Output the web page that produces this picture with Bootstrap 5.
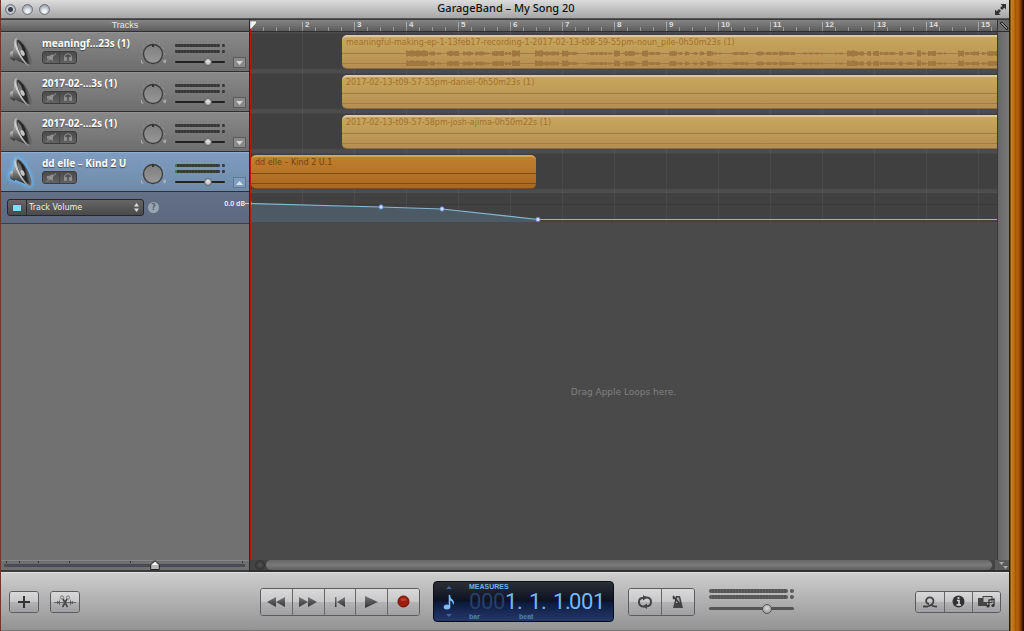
<!DOCTYPE html>
<html lang="en">
<head>
<meta charset="utf-8">
<meta name="viewport" content="width=device-width, initial-scale=1">
<title>GarageBand – My Song 20</title>
<link href="https://cdn.jsdelivr.net/npm/bootstrap@5.3.0/dist/css/bootstrap.min.css" rel="stylesheet">
<style>
body{font-family:"DejaVu Sans","Noto Sans",sans-serif;font-size:9px;line-height:12px;background:#4a4a4a;color:#eee}
button,select,input{font-family:inherit;border-radius:0}
.shrinkable{min-width:0}
.desk{border-left:1px solid #6b3a26}
.wood{width:15px;background:linear-gradient(90deg,#2d1a08 0 1px,#d08a1c 2px,#b96e14 4px,#c97d18 5px,#a04e08 6px,#b8660f 8px,#a85408 10px,#7a3503 12px,#2c0d02 14px)}
/* title bar */
.titlebar{height:19px;background:linear-gradient(#dcdcdc,#a6a6a6);border-bottom:1px solid #555;color:#111;padding:0 2px 0 4px}
.titlebar h1{font:500 11px/16px "Noto Sans",sans-serif;margin:0;padding-bottom:2px}
.side{width:60px}
.lights{gap:6px}
.light{width:11px;height:11px;padding:0;border:1px solid #6d727a;border-radius:50%;background:radial-gradient(circle at 50% 70%,#eef0f4 20%,#b4b8c2 60%,#7f848e)}
.light.dirty{background:radial-gradient(circle,#3c4046 0 2px,#c8ccd4 3px,#9095a0)}
/* tracks column */
.tracks{width:249px;background:#717171;border-right:1px solid #2a2a2a}
.strip{height:13px;background:linear-gradient(#858585,#5c5c5c);border-top:1px solid #3b3b3b;border-bottom:1px solid #2e2e2e}
.strip-title{font:9px/11px "Liberation Sans",sans-serif;color:#e8e8e8}
.track{height:40px;background:linear-gradient(#888,#6e6e6e);border-top:1px solid #929292;border-bottom:1px solid #2f2f2f;padding:0 3px 0 7px}
.track.on{background:linear-gradient(#7e9cc1,#708ba8);border-top-color:#93aecd}
.tr-icon{width:34px}
.track.on .tr-icon svg{filter:drop-shadow(0 0 2px #4fb0ff) drop-shadow(0 0 1px #7cc8ff)}
.tr-name{font:700 10px/13px "Noto Sans",sans-serif;color:#fff;text-shadow:0 1px 1px #444;white-space:nowrap}
.pair{width:35px;height:13px;margin-top:1px;border:1px solid #3d3d3d;border-radius:3px;overflow:hidden;background:linear-gradient(#4a4a4a,#626262)}
.pair button{flex:1;padding:0;border:0;background:none;display:flex;align-items:center;justify-content:center}
.pair button+button{border-left:1px solid #444}
.pan{margin:3px 7px 0 0}
.vol{width:50px;gap:3px;padding-top:6px}
.led-row{gap:2px}
.led{height:3px;border-radius:1px;background:repeating-linear-gradient(90deg,#373737 0 2px,#424242 2px 3px)}
.led.clip{width:3px}
.track.on .led.long{border-left:2px solid #3c7a3f}
input[type=range]{appearance:none;-webkit-appearance:none;background:none;width:100%;margin:0;display:block}
.vol input{height:8px;margin-top:2px}
.vol input::-webkit-slider-runnable-track{height:2px;background:#222;border-radius:1px}
.vol input::-webkit-slider-thumb{-webkit-appearance:none;width:8px;height:8px;margin-top:-3px;border-radius:50%;border:1px solid #666;background:radial-gradient(circle at 50% 40%,#eee,#999)}
.fold{width:13px;height:11px;padding:0;border:1px solid #5a5a5a;background:#8a8a8a;display:flex;align-items:center;justify-content:center;margin-bottom:3px}
.track.on .fold{background:#7f9dbd;border-color:#5c7896}
.auto{height:32px;background:linear-gradient(#647085,#5c697e);border-bottom:1px solid #3a3f49;padding:0 0 0 6px}
.param{width:137px;height:17px;border:1px solid #272727;border-radius:3px;background:linear-gradient(#666,#4a4a4a)}
.param input{appearance:none;width:8px;height:6px;margin:0 5px;background:#7fdcff;box-shadow:0 0 1px #222}
.param .led-box{width:19px;border-right:1px solid #2c2c2c}
.param select{appearance:none;border:0;background:none;color:#eee;font-size:8px;line-height:13px;padding:0 0 0 2px;width:100%}
.param svg{right:4px;top:3px;pointer-events:none}
.help{width:11px;height:11px;padding:0;border:0;border-radius:50%;background:#9aa5b4;color:#556278;font-weight:700;font-size:8px;line-height:11px}
.db{font:600 7px/9px "Noto Sans",sans-serif;padding-top:7px}
.zoomrow{height:12px;padding:0 4px 0 3px;border-top:1px solid #858585;border-bottom:2px solid #3b3b3b;
 background:linear-gradient(#333,#333) 5px 0/1px 2px no-repeat,linear-gradient(#333,#333) 18px 0/1px 2px no-repeat,linear-gradient(#333,#333) 37px 0/1px 2px no-repeat,linear-gradient(#333,#333) 68px 0/1px 2px no-repeat,linear-gradient(#333,#333) 129px 0/1px 2px no-repeat,linear-gradient(#333,#333) 241px 0/1px 2px no-repeat,#6f6f6f}
.zoomrow input{height:9px}
.zoomrow input::-webkit-slider-runnable-track{height:3px;border-radius:1px;background:#474c52}
.zoomrow input::-webkit-slider-thumb{-webkit-appearance:none;width:10px;height:10px;margin-top:-4px;border:0;border-radius:0;background:url("data:image/svg+xml,%3Csvg xmlns='http://www.w3.org/2000/svg' viewBox='0 0 10 10'%3E%3Cpath d='M5 .7 9.300 4.500v5H.7v-5z' fill='%23b8b8b8' stroke='%23222'/%3E%3Cpath d='M5 2 8 5H2z' fill='%23fff'/%3E%3C/svg%3E") center/100% 100% no-repeat}
/* timeline */
.ruler{overflow:hidden;background:repeating-linear-gradient(90deg,#999 0 1px,transparent 1px 13px) 0 100%/100% 4px no-repeat,repeating-linear-gradient(90deg,#aaa 0 1px,transparent 1px 52px) 0 100%/100% 9px no-repeat}
.bar-no{flex:0 0 52px;height:11px;color:#ddd;font:700 8px/10px "Liberation Sans",sans-serif;padding-left:3px}
.corner{width:12px;background:#6a6a6a;border-left:1px solid #333}
.lanes{background:#4a4a4a}
.lane{height:40px;padding-top:3px;background:repeating-linear-gradient(90deg,#ffffff0c 0 1px,transparent 1px 52px),linear-gradient(#4c4c4c 0 1px,#404040 2px 36px,#4c4c4c 38px)}
.clip-box{height:34px;border-radius:5px 0 0 5px;border-top:2px solid #dccb92;border-bottom:1px solid #8f6d40;color:#a36f2e;padding-left:4px;overflow:hidden;white-space:nowrap;
 background:linear-gradient(#9f7d47,#9f7d47) 0 16px/100% 1px no-repeat,linear-gradient(#9f7d47,#9f7d47) 0 26px/100% 1px no-repeat,linear-gradient(#c7a85b,#b68d53)}
.clip-box.hot{width:285px;border-radius:5px;border-top-color:#d5a352;border-bottom-color:#7d4a18;color:#74401a;background:linear-gradient(#824a17,#824a17) 0 16px/100% 1px no-repeat,linear-gradient(#824a17,#824a17) 0 26px/100% 1px no-repeat,linear-gradient(#c17f2c,#a96822)}
.clip-name{font-size:8px;line-height:11px}
.wave{left:0;top:9px}
.curve{height:32px;background:repeating-linear-gradient(90deg,#ffffff0c 0 1px,transparent 1px 52px) 0 0/100% 30px no-repeat,linear-gradient(#4f4f4f 0 1px,#414141 1px 12px,#393939 12px 13px,#414141 13px 30px,#4a4a4a 30px)}
.drop{color:#808080}
.playhead{width:1px;top:10px;bottom:12px;left:0;background:#b31b05}
.playhead svg{position:absolute;left:0;top:-9px}
.vscroll{width:12px;background:linear-gradient(90deg,#666,#7a7a7a);border-left:1px solid #3a3a3a}
.hscroll{height:12px;background:#444;border-bottom:2px solid #303030}
.knob{width:10px;height:10px;border-radius:50%;background:radial-gradient(#555,#222);margin-left:5px}
.thumb{height:10px;background:linear-gradient(#686868,#7a7a7a,#5f5f5f);border-radius:5px;margin:0 3px 0 1px}
/* transport */
.transport{height:59px;background:linear-gradient(#cdcdcd,#939393);border-top:1px solid #e0e0e0;border-bottom:1px solid #777;padding:0 8px}
.keys{border:1px solid #5c5c5c;border-radius:3px;overflow:hidden}
.keys button{border:0;padding:0;display:flex;align-items:center;justify-content:center;background:linear-gradient(#d9d9d9 0,#c8c8c8 48%,#b2b2b4 52%,#a0a0a2)}
.keys button+button{border-left:1px solid #666}
.small-keys{height:22px}.small-keys button{width:28px}
.big-keys{height:28px}.big-keys button{flex:1 1 0}
.five{width:160px}.two{width:67px}
.left-tools{width:251px;gap:11px}
.lcd{width:181px;height:41px;margin:0 14px 0 13px;border:1px solid #090d18;border-radius:4px;background:linear-gradient(#2a2f35,#0d1222 48%,#0b1a3c 52%,#26386b);color:#6bb0f3;padding:0 8px 0 9px}
.readout{margin-left:14px}
.lcd .lab{font:700 7px/9px "Liberation Sans",sans-serif}
.lcd .sub{color:#4e82c0}
.lcd .sub span{width:50px}
.digits{font:400 22px/21px Roboto,sans-serif;color:#72b8fa}
.digits span{width:12px;text-align:center}
.digits .off{color:#26406c}
.digits .dot{width:4px;text-align:left}
.digits .gap{width:8px}
.master{width:85px;gap:2px;margin-left:14px}
.master .led{height:4px;border-radius:2px;background:repeating-linear-gradient(90deg,#555 0 2px,#606060 2px 3px)}
.master .led.clip{width:4px}
.master input{height:11px;margin-top:2px}
.master input::-webkit-slider-runnable-track{height:3px;background:#555;border-radius:2px}
.master input::-webkit-slider-thumb{-webkit-appearance:none;width:10px;height:10px;margin-top:-3px;border-radius:50%;border:1px solid #555;background:radial-gradient(circle at 50% 40%,#ddd,#8a8a8a)}
</style>
</head>
<body>
<svg width="0" height="0" class="position-absolute">
 <defs>
  <linearGradient id="metal" x1="0" x2="1" y1="0" y2=".4"><stop offset="0" stop-color="#fff"/><stop offset=".4" stop-color="#aaa"/><stop offset="1" stop-color="#555"/></linearGradient>
  <linearGradient id="inside" x1="0" x2="1" y1="0" y2="1"><stop offset="0" stop-color="#999"/><stop offset=".3" stop-color="#333"/><stop offset=".6" stop-color="#222"/><stop offset="1" stop-color="#aaa"/></linearGradient>
  <linearGradient id="magnet" x1="0" x2="0" y1="0" y2="1"><stop offset="0" stop-color="#ddd"/><stop offset=".45" stop-color="#888"/><stop offset="1" stop-color="#222"/></linearGradient>
  <linearGradient id="cap" x1="0" x2="0" y1="0" y2="1"><stop offset="0" stop-color="#7e7e7e"/><stop offset="1" stop-color="#989898"/></linearGradient>
  <linearGradient id="ink" x1="0" x2="0" y1="0" y2="1"><stop offset="0" stop-color="#777"/><stop offset="1" stop-color="#333"/></linearGradient>
 </defs>
 <symbol id="speaker" viewBox="0 0 25 32"><path d="M6 14.500 2.500 16q-2 3 0 7l4.500 2z" fill="url(#magnet)"/><path d="M7 4 5 15q-1 4 1.500 8.500L20 29z" fill="url(#magnet)"/><ellipse cx="15" cy="16" rx="5" ry="15.800" fill="url(#metal)" transform="rotate(-27 15 16)"/><ellipse cx="15.500" cy="16" rx="3.600" ry="13.800" fill="url(#inside)" transform="rotate(-27 15.500 16)"/><path d="M10 6q4 4 4.500 9l-3 1Q9.500 10 10 6z" fill="#777"/><ellipse cx="14.500" cy="17" rx="1.900" ry="3" fill="#c4c4c4" transform="rotate(-27 14.500 17)"/></symbol>
 <symbol id="mute" viewBox="0 0 11 9"><path d="M1 3h2l4-2v7L3 6H1z" fill="#8c8c8c"/><path d="M1 8.500 10 .5" stroke="#9a9a9a"/></symbol>
 <symbol id="solo" viewBox="0 0 10 9"><path d="M1.500 6V4a3.500 3.300 0 0 1 7 0v2" fill="none" stroke="#8f8f8f"/><rect x="1" y="4" width="3" height="4" rx="1" fill="#8f8f8f"/><rect x="6" y="4" width="3" height="4" rx="1" fill="#8f8f8f"/></symbol>
 <symbol id="pan" viewBox="0 0 30 28"><path d="M4.500 18A11.500 11.500 0 1 1 25.500 18" fill="none" stroke="#aaa" stroke-dasharray="1 4.800"/><circle cx="15" cy="14" r="9.500" fill="url(#cap)" stroke="#3c3c3c" stroke-width="1.300"/><path d="M15 4.500v2.500" stroke="#333" stroke-width="2"/><path d="M3.500 20v3h2M26 23v-3h1.500v1.500H26l2 1.500" fill="none" stroke="#bbb" stroke-width=".8"/></symbol>
 <symbol id="down" viewBox="0 0 7 4"><path d="M0 0h7L3.500 4z" fill="#d5d5d5"/></symbol>
 <symbol id="up" viewBox="0 0 7 4"><path d="M0 4h7L3.500 0z" fill="#d5e2f0"/></symbol>
</svg>

<div class="d-flex min-vh-100">
<div class="desk shrinkable d-flex flex-column flex-grow-1">
 <header class="titlebar d-flex justify-content-between align-items-center">
  <div class="side lights d-flex"><button class="light dirty" aria-label="Close"></button><button class="light" aria-label="Minimize"></button><button class="light" aria-label="Zoom"></button></div>
  <h1>GarageBand – My Song 20</h1>
  <div class="side d-flex justify-content-end"><svg width="13" height="13" viewBox="0 0 13 13"><path d="M6.500 1H12v5.500l-1.800-1.800L8 7 6 5l2.300-2.200zM6.500 12H1V6.500l1.800 1.800L5 6l2 2-2.300 2.200z" fill="#333"/></svg></div>
 </header>

 <main class="d-flex flex-grow-1">
  <section class="tracks d-flex flex-column flex-shrink-0">
   <div class="strip strip-title text-center">Tracks</div>
   <div id="trackList"></div>
   <div class="auto d-flex align-items-center">
    <div class="param d-flex position-relative align-items-center">
     <div class="led-box d-flex align-items-center h-100 flex-shrink-0"><input type="checkbox" checked aria-label="Enable automation"></div>
     <select aria-label="Automation parameter"><option>Track Volume</option></select>
     <svg class="position-absolute" width="5" height="9" viewBox="0 0 5 9"><path d="M0 3.500h5L2.500 0zM0 5.500h5L2.500 9z" fill="#ddd"/></svg>
    </div>
    <button class="help ms-1 text-center" aria-label="Help">?</button>
    <div class="db ms-auto align-self-start d-flex align-items-center">0.0 dB<svg width="4" height="3"><path d="M0 1.500h4" stroke="#ccc"/></svg></div>
   </div>
   <div class="zoomrow mt-auto"><input type="range" min="0" max="100" value="63" aria-label="Timeline zoom"></div>
  </section>

  <section class="shrinkable flex-grow-1 d-flex flex-column position-relative">
   <div class="strip d-flex"><div id="ruler" class="ruler shrinkable d-flex flex-grow-1"></div>
    <div class="corner flex-shrink-0 d-flex align-items-center justify-content-center"><svg width="10" height="10" viewBox="0 0 10 10"><path d="m1 2 2-1 6 6-1 2z" fill="#888" stroke="#222"/></svg></div></div>
   <div class="d-flex flex-grow-1">
    <div class="lanes shrinkable flex-grow-1 d-flex flex-column">
     <div class="lane"><div class="clip-box position-relative" style="margin-left:92px"><div class="clip-name">meaningful-making-ep-1-13feb17-recording-1-2017-02-13-t08-59-55pm-noun_pile-0h50m23s (1)</div><svg id="wave" class="wave position-absolute" width="100%" height="20"></svg></div></div>
     <div class="lane"><div class="clip-box" style="margin-left:92px"><div class="clip-name">2017-02-13-t09-57-55pm-daniel-0h50m23s (1)</div></div></div>
     <div class="lane"><div class="clip-box" style="margin-left:92px"><div class="clip-name">2017-02-13-t09-57-58pm-josh-ajima-0h50m22s (1)</div></div></div>
     <div class="lane"><div class="clip-box hot" style="margin-left:1px"><div class="clip-name">dd elle – Kind 2 U.1</div></div></div>
     <div class="curve"><svg class="d-block" width="100%" height="32"><path d="M0 11.500 131 15l61 2 96 10v3H0z" fill="#4b5a65"/><path d="M0 11.500 131 15l61 2 96 10.500h6000" fill="none" stroke="#86b8d2" stroke-width="1.200"/><g fill="#cfe0ff" stroke="#5c80d8"><circle cx="0" cy="11.500" r="2"/><circle cx="131" cy="15" r="2.200"/><circle cx="192" cy="17" r="2.200"/><circle cx="288" cy="27.500" r="2.200"/></g></svg></div>
     <div class="drop flex-grow-1 d-flex align-items-center justify-content-center">Drag Apple Loops here.</div>
    </div>
    <div class="vscroll flex-shrink-0"></div>
   </div>
   <div class="hscroll d-flex"><div class="knob"></div><div class="thumb flex-grow-1"></div><svg width="14" height="10" viewBox="0 0 14 10"><path d="M0 0h14v10H0z" fill="#5a5a5a"/><path d="M4 2h5L6.500 5zM8 6h5l-2.500 3z" fill="#aaa"/></svg></div>
   <div class="playhead position-absolute"><svg width="7" height="9" viewBox="0 0 7 9"><path d="M0 1h6.500v2L1 9H0z" fill="#f2f2f2" stroke="#333" stroke-width=".4"/></svg></div>
  </section>
 </main>

 <footer class="transport d-flex align-items-center">
  <div class="left-tools d-flex flex-shrink-0">
   <div class="keys small-keys"><button class="h-100" aria-label="Add track"><svg width="14" height="14" viewBox="0 0 14 14"><path d="M7 1v12M1 7h12" stroke="#333" stroke-width="2"/></svg></button></div>
   <div class="keys small-keys"><button class="h-100" aria-label="Edit track"><svg width="22" height="14" viewBox="0 0 22 14"><path d="M9 4l4.500 8M13 4l-4.500 8" stroke="#444" stroke-width="1.600"/><circle cx="8" cy="2.500" r="1.600" fill="none" stroke="#777"/><circle cx="14" cy="2.500" r="1.600" fill="none" stroke="#777"/><path d="M0 7.500h22" stroke="#555" stroke-width=".8"/><path d="M3 6l2 1 1-3v7l-1-3-2 1zM19 6l-2 1-1-3v7l1-3 2 1z" fill="#555"/></svg></button></div>
  </div>
  <div class="d-flex align-items-center flex-shrink-0">
   <div class="keys big-keys five d-flex">
    <button aria-label="Rewind"><svg width="18" height="10"><path d="M9 0v10L0 5zM18 0v10L9 5z" fill="url(#ink)"/></svg></button>
    <button aria-label="Fast forward"><svg width="18" height="10"><path d="M0 0v10l9-5zM9 0v10l9-5z" fill="url(#ink)"/></svg></button>
    <button aria-label="Go to beginning"><svg width="10" height="10"><path d="M0 0h1.500v10H0zM10 0v10L2 5z" fill="url(#ink)"/></svg></button>
    <button aria-label="Play"><svg width="13" height="12"><path d="M0 0v12l13-6z" fill="url(#ink)"/></svg></button>
    <button aria-label="Record"><svg width="13" height="13"><circle cx="6.500" cy="6.500" r="5.500" fill="#a01c0d" stroke="#601208"/><ellipse cx="6.500" cy="4.500" rx="3" ry="1.500" fill="#b8402d"/></svg></button>
   </div>
   <div class="lcd d-flex">
    <svg class="flex-shrink-0" width="12" height="37" viewBox="0 0 12 37"><path d="M3 7h6L6 4zM3 32h6l-3 3z" fill="#3f6596"/><path d="M6.500 13v12" stroke="#7dbcf5" stroke-width="1.600"/><path d="M6 12q1 4 4 6 2 3 0 5 0-4-4-5z" fill="#7dbcf5"/><ellipse cx="4" cy="25" rx="3.300" ry="2.500" fill="#7dbcf5"/></svg>
    <div class="readout">
     <div class="lab">MEASURES</div>
     <div class="digits d-flex" aria-label="Position"><span class="off">0</span><span class="off">0</span><span class="off">0</span><span>1</span><span class="dot">.</span><span class="gap"></span><span>1</span><span class="dot">.</span><span class="gap"></span><span>1</span><span class="dot">.</span><span>0</span><span>0</span><span>1</span></div>
     <div class="lab sub d-flex"><span>bar</span><span>beat</span></div>
    </div>
   </div>
   <div class="keys big-keys two d-flex">
    <button aria-label="Cycle"><svg width="16" height="14" viewBox="0 0 16 14"><path d="M8.500 11.500H6A4.500 4.500 0 0 1 2 7q0-4 4-4h1M7.500 2.500H10A4.500 4.500 0 0 1 14 7q0 4-4 4.300" fill="none" stroke="#444" stroke-width="2"/><path d="m6 0 4 2.700L6 5.500zM10 8.500V14l-4-2.700z" fill="#444"/></svg></button>
    <button aria-label="Metronome"><svg width="12" height="14" viewBox="0 0 12 14"><path d="M4 1h4l3 12H1z" fill="#444"/><path d="M5 2.500h2L8 8H4z" fill="#aaa"/><path d="M1 1l7 8" stroke="#333" stroke-width="1.300"/><circle cx="2" cy="3" r="1.400" fill="#444"/></svg></button>
   </div>
   <div class="master d-flex flex-column">
    <div class="led-row d-flex"><div class="led long flex-grow-1"></div><div class="led clip"></div></div>
    <div class="led-row d-flex"><div class="led long flex-grow-1"></div><div class="led clip"></div></div>
    <input type="range" min="0" max="100" value="70" aria-label="Master volume">
   </div>
  </div>
  <div class="keys small-keys d-flex ms-auto">
   <button aria-label="Loop browser"><svg width="14" height="12" viewBox="0 0 14 12"><path d="M0 10.500h4.500Q10.500 9 10.500 5a3.700 3.700 0 0 0-7.400 0q0 2.500 3 3M8 9q3 2 6 1.500" fill="none" stroke="#444" stroke-width="1.800"/></svg></button>
   <button aria-label="Track info"><svg width="13" height="13" viewBox="0 0 13 13"><circle cx="6.500" cy="6.500" r="6" fill="#333"/><path d="M5 5.500h2V10M4.500 10h4.500" stroke="#ddd" stroke-width="1.500" fill="none"/><circle cx="6.500" cy="3" r="1.100" fill="#ddd"/></svg></button>
   <button aria-label="Media browser"><svg width="18" height="12" viewBox="0 0 18 12"><rect y="2" width="9" height="8" fill="#444"/><rect x="5" y=".5" width="9" height="6" fill="#bbb" stroke="#444"/><path d="M11 10V4l5-1v6" fill="none" stroke="#333" stroke-width="1.300"/><circle cx="10" cy="10" r="1.600" fill="#333"/><circle cx="15" cy="9.500" r="1.600" fill="#333"/></svg></button>
  </div>
 </footer>
</div>
<div class="wood flex-shrink-0"></div>
</div>

<script src="https://cdn.jsdelivr.net/npm/bootstrap@5.3.0/dist/js/bootstrap.bundle.min.js"></script>
<script>
const tracks = ['meaningf…23s (1)', '2017-02-…3s (1)', '2017-02-…2s (1)', 'dd elle – Kind 2 U'];
const led = '<div class="led-row d-flex"><div class="led long flex-grow-1"></div><div class="led clip"></div></div>';
document.getElementById('trackList').innerHTML = tracks.map((name, i) => {
  const on = i === 3;
  return `<div class="track d-flex align-items-center ${on ? 'on' : ''}">
   <div class="tr-icon"><svg width="25" height="32"><use href="#speaker"/></svg></div>
   <div class="flex-grow-1 align-self-start pt-1"><div class="tr-name">${name}</div>
    <div class="pair d-flex"><button aria-label="Mute ${name}"><svg width="11" height="9"><use href="#mute"/></svg></button><button aria-label="Solo ${name}"><svg width="10" height="9"><use href="#solo"/></svg></button></div></div>
   <svg class="pan flex-shrink-0" width="30" height="28"><use href="#pan"/></svg>
   <div class="vol d-flex flex-column flex-shrink-0 me-2">${led}${led}<input type="range" value="${on ? 70 : 68}" aria-label="Volume ${name}"></div>
   <button class="fold flex-shrink-0 align-self-end" aria-label="Automation ${name}"><svg width="7" height="4"><use href="#${on ? 'up' : 'down'}"/></svg></button>
  </div>`;
}).join('');

// one label per bar, as many as fit the ruler
const ruler = document.getElementById('ruler');
function drawRuler() {
  const count = Math.ceil((ruler.clientWidth - 14) / 52);
  let bars = '';
  for (let n = 1; n <= count; n++) bars += `<div class="bar-no">${n > 1 ? n : ''}</div>`;
  ruler.innerHTML = bars;
}
drawRuler();
window.addEventListener('resize', drawRuler);

// audio bursts: start, length, height
const bursts = [[64,22,6],[87,6,4],[93,5,2],[105,12,5],[121,10,4],[133,10,4],[143,6,2],[150,12,5],[163,5,3],[170,7,6],[193,7,6],[201,15,4],[220,6,6],[226,10,3],[243,3,2],[248,7,3],[257,8,3],[266,4,2],[272,5,6],[279,3,2],[283,10,5],[293,5,2],[300,5,6],[306,12,3],[327,8,5],[336,3,3],[343,3,4],[351,3,3],[358,4,4],[365,5,5],[371,7,2],[390,15,3],[414,7,4],[423,11,3],[430,5,2],[437,5,4],[443,10,3],[459,22,2],[493,8,2],[505,9,6],[514,8,4],[525,4,5],[531,6,5],[538,5,3],[544,9,3],[557,4,4],[564,8,3],[575,4,6],[580,4,3],[586,8,5],[596,7,2],[616,5,6],[623,7,3],[631,5,4],[640,4,3],[645,12,5]];
let d = '';
for (const [x, w, h] of bursts) for (const y of [7.5, 17.5]) for (let k = 0; k < w; k += 2) {
  const a = h / 2 - ((k * 7 + x) % 3 === 0 ? 0.5 : 0);
  d += `M${x + k} ${y - a}h2v${2 * a}h-2z`;
}
document.getElementById('wave').innerHTML = `<path d="${d}" fill="#a07743"/>`;
</script>
</body>
</html>
